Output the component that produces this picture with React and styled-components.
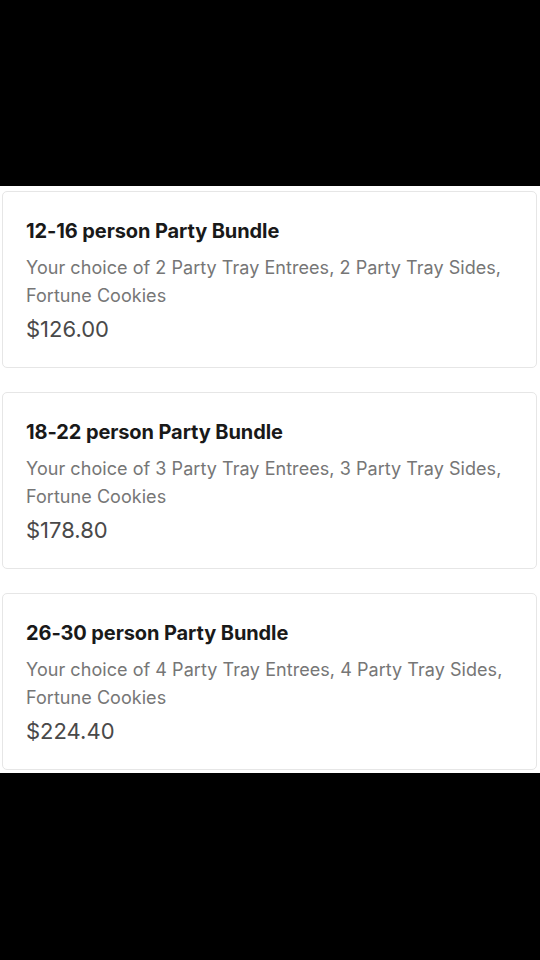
import React from 'react';
import styled, { createGlobalStyle } from 'styled-components';

const GlobalStyle = createGlobalStyle`
  html, body {
    margin: 0;
    padding: 0;
    background: #000;
  }
  body {
    font-family: Inter, "Noto Sans", sans-serif;
    -webkit-font-smoothing: antialiased;
  }
`;

const Screen = styled.div`
  width: 540px;
  height: 960px;
  background: #000;
  padding-top: 186px;
  box-sizing: border-box;
`;

const List = styled.div`
  background: #fff;
  display: flex;
  flex-direction: column;
  gap: 24px;
  padding: 5px 3px 3px 2px;
`;

const Card = styled.div`
  height: 177px;
  box-sizing: border-box;
  border: 1px solid #e6e6e6;
  border-radius: 5px;
  padding: 26px 23px 0 23px;
`;

const Title = styled.h2`
  margin: 0;
  font-size: 20px;
  line-height: 26px;
  font-weight: 700;
  color: #191919;
  letter-spacing: -0.1px;
`;

const Description = styled.p`
  margin: 10px 0 0;
  font-size: 18px;
  line-height: 28px;
  color: #767676;
  letter-spacing: 0.05px;
`;

const Price = styled.div`
  margin-top: 5px;
  font-size: 22px;
  line-height: 28px;
  color: #494949;
`;

const bundles = [
  { title: '12-16 person Party Bundle', count: 2, price: '$126.00' },
  { title: '18-22 person Party Bundle', count: 3, price: '$178.80' },
  { title: '26-30 person Party Bundle', count: 4, price: '$224.40' },
];

export default function App() {
  return (
    <Screen>
      <GlobalStyle />
      <List>
        {bundles.map((b) => (
          <Card key={b.title}>
            <Title>{b.title}</Title>
            <Description>
              Your choice of {b.count} Party Tray Entrees, {b.count} Party Tray Sides,
              <br />
              Fortune Cookies
            </Description>
            <Price>{b.price}</Price>
          </Card>
        ))}
      </List>
    </Screen>
  );
}
